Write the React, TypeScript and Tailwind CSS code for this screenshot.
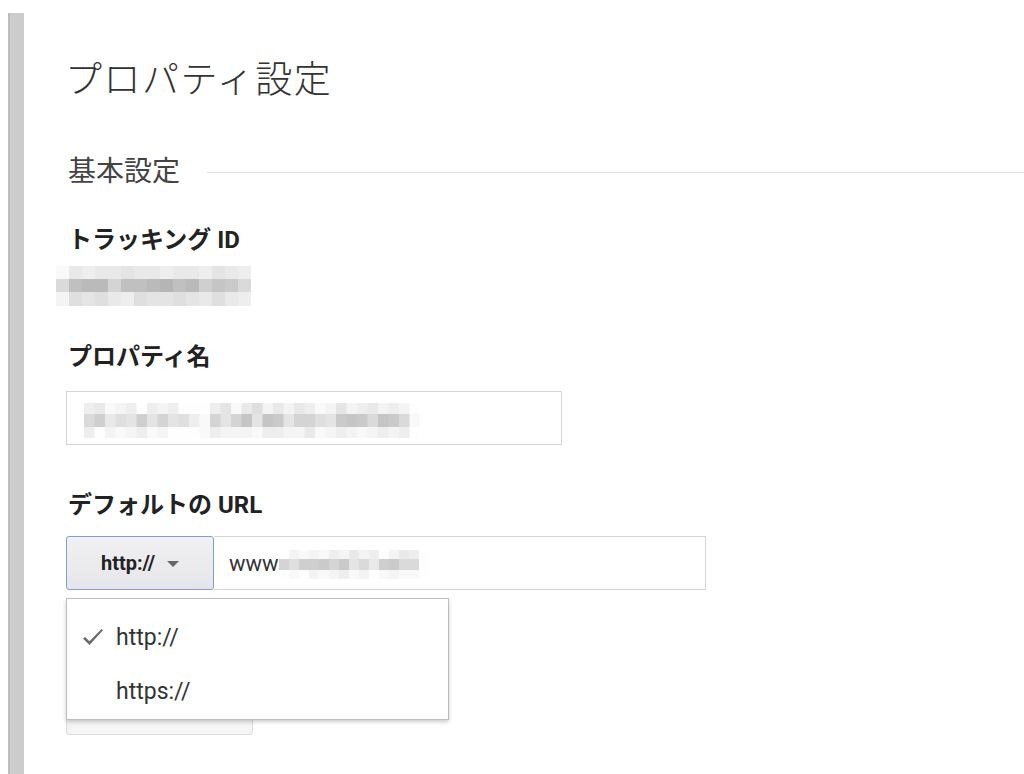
import React from "react";

function Mosaic({ rows, cw, rh, x0 = 0 }: { rows: string[]; cw: number; rh: number[]; x0?: number }) {
  const cols = Math.max(...rows.map((r) => r.length));
  const width = cols * cw + x0;
  const height = rh.reduce((a, b) => a + b, 0);
  let y = 0;
  const rects: React.ReactNode[] = [];
  rows.forEach((r, ri) => {
    for (let i = 0; i < r.length; i++) {
      const ch = r[i];
      if (ch === " ") continue;
      const n = parseInt(ch, 16);
      const g = Math.round(176 + n * 5.2);
      rects.push(
        <rect key={ri + "-" + i} x={x0 + i * cw} y={y} width={cw + 0.5} height={rh[ri] + 0.5} fill={`rgb(${g},${g},${g})`} />
      );
    }
    y += rh[ri];
  });
  return (
    <svg width={width} height={height} viewBox={`0 0 ${width} ${height}`} className="block">
      {rects}
    </svg>
  );
}

const font = { fontFamily: 'Roboto, "Noto Sans CJK JP", "Noto Sans", sans-serif' };

export default function App() {
  return (
    <div className="flex min-h-[774px] bg-white text-[#333]" style={font}>
      <div className="ml-[8px] mt-[13px] h-[761px] w-[16px] shrink-0 border-l-[2px] border-[#bdbdbd] bg-[#cccccc]" />
      <div className="flex-1 pl-[44px] pt-[62px]">
        <h1 className="-ml-[3px] text-[37px] leading-[37px] font-light tracking-[1.5px] text-[#333]">プロパティ設定</h1>

        <div className="mt-[59px] flex items-center">
          <div className="text-[28px] leading-[28px] font-normal text-[#444]">基本設定</div>
          <div className="ml-[27px] h-px flex-1 bg-[#e0e0e0]" />
        </div>

        <div className="mt-[42px] text-[24px] leading-[24px] font-bold text-[#222]">トラッキング ID</div>
        <div className="mt-[14px] -ml-[12px]">
          <Mosaic
            cw={13}
            rh={[13, 13, 14]}
            rows={["ebcbbabbcbbcabc", "832273321326458", "d9a9bc9aa9ab9bc"]}
          />
        </div>

        <div className="mt-[39px] text-[24px] leading-[24px] font-bold text-[#222]">プロパティ名</div>
        <div className="mt-[22px] ml-[-2px] h-[54px] w-[496px] border border-[#d4d4d4] bg-white pl-[17px] pt-[11px]">
          <Mosaic
            cw={10.5}
            rh={[11, 13, 11]}
            rows={[
              "cbedcfcdcfffcaeb9dbdbcedadcbdcdf",
              "86b9a6a7a9ce7a74a45a779a5458458e",
              "cfdedcedfffecdddeccddbedcdedcdcf",
            ]}
          />
        </div>

        <div className="mt-[48px] text-[24px] leading-[24px] font-bold text-[#222]">デフォルトの URL</div>

        <div className="relative mt-[19px] ml-[-2px] flex h-[54px] w-[640px]">
          <div className="flex h-full w-[148px] items-center justify-center gap-[12px] rounded-[3px] border border-[#7f9fd6] bg-gradient-to-b from-[#f1f1f3] to-[#e6e6ea]">
            <span className="text-[20px] font-bold text-[#222]">http://</span>
            <svg width="12" height="6" viewBox="0 0 12 6" className="mt-[2px]">
              <path d="M0 0 L12 0 L6 6 Z" fill="#666" />
            </svg>
          </div>
          <div className="flex h-full flex-1 items-center border border-l-0 border-[#d4d4d4] bg-white pl-[15px]">
            <span className="text-[22px] text-[#333]">www</span>
            <div className="mt-[2px]">
              <Mosaic
                cw={10}
                rh={[9, 11, 9]}
                rows={["fdedecdbdcfdbcf", "7966575a8b6588f", "fefdedcedfedeef"]}
              />
            </div>
          </div>

          <div className="absolute left-0 top-[62px] z-10 h-[122px] w-[383px] border border-[#bdbdbd] bg-white pt-[12px] shadow-[0_2px_4px_rgba(0,0,0,0.2)]">
            <div className="relative flex h-[54px] items-center pl-[49px] text-[23px] text-[#333]">
              <svg width="22" height="18" viewBox="0 0 22 18" className="absolute left-[15px] top-[17px]">
                <path d="M1 10.5 L3 9 L7.5 13.2 L19.5 1 L21 2.2 L7.5 17 Z" fill="#6a6a6a" />
              </svg>
              http://
            </div>
            <div className="flex h-[54px] items-center pl-[49px] text-[23px] text-[#333]">https://</div>
          </div>
        </div>

        <div className="mt-[105px] ml-[-2px] h-[40px] w-[187px] rounded-[3px] border border-[#dcdcdc] bg-[#f5f5f5]" />
      </div>
    </div>
  );
}
